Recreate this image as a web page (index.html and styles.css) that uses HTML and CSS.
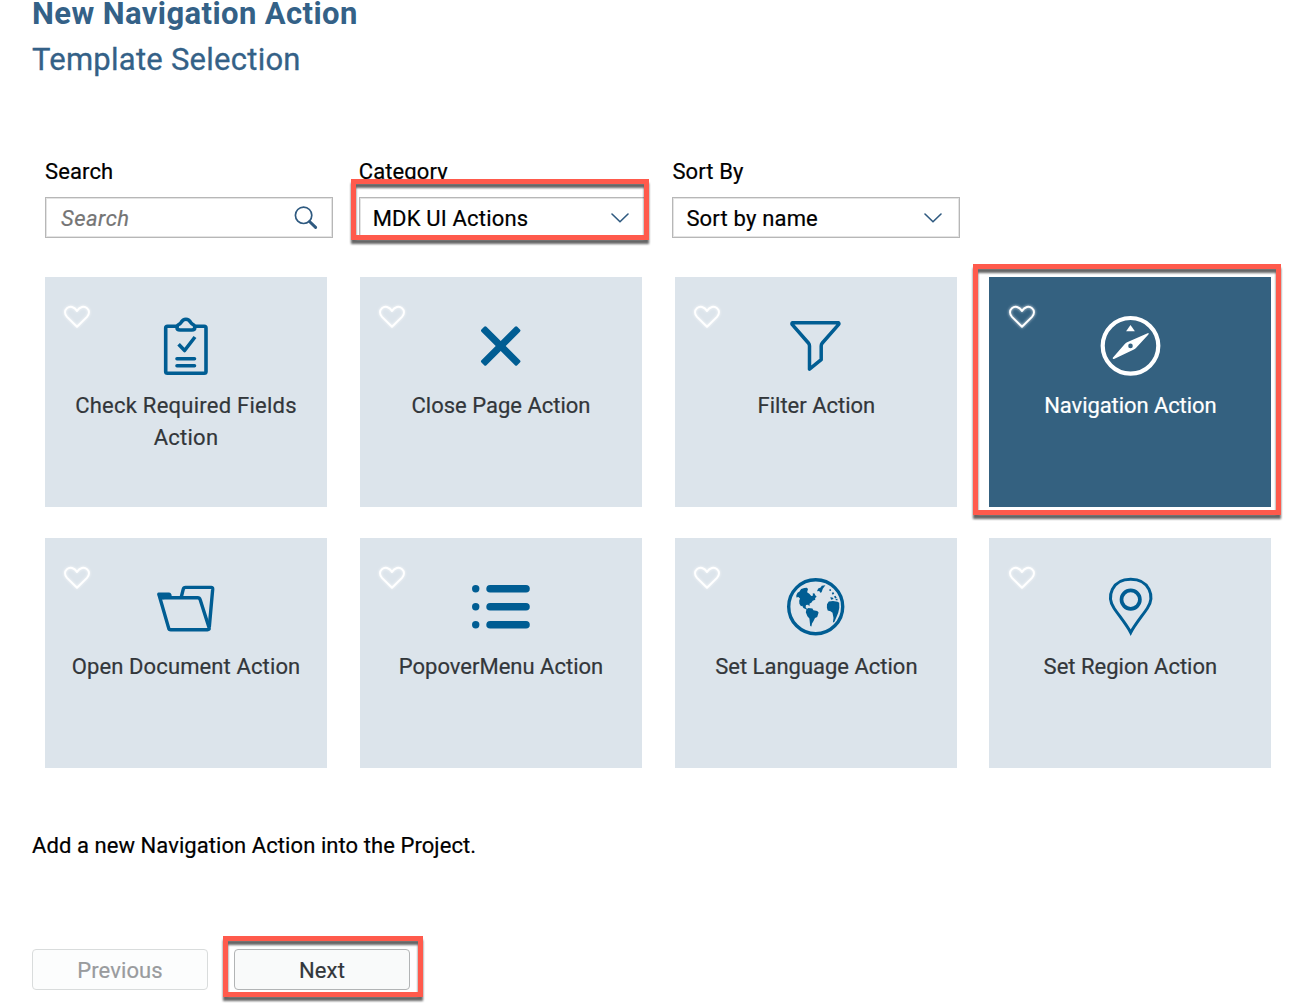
FILE: index.html
```html
<!DOCTYPE html>
<html lang="en">
<head>
<meta charset="utf-8">
<title>New Navigation Action</title>
<link rel="stylesheet" href="styles.css">
</head>
<body>
<svg class="defs" aria-hidden="true">
  <symbol id="heart" viewBox="0 0 34 30"><path d="M17 25.7 7 15.9C4.3 13.1 4.4 9.3 6.9 7.2c3-2.5 7.400-1.700 10.100 2.800 2.700-4.500 7.100-5.300 10.100-2.800 2.500 2.100 2.600 5.900-.1 8.700z"/></symbol>
</svg>
<main class="wizard">
  <h1 class="title">New Navigation Action</h1>
  <h2 class="subtitle">Template Selection</h2>

  <section class="filters">
    <div class="field">
      <label class="label">Search</label>
      <div class="control">
        <span class="placeholder">Search</span>
        <svg class="search-icon" width="24" height="24" viewBox="0 0 24 24"><circle cx="9.600" cy="9.300" r="8.200" fill="none" stroke="#2f5a80" stroke-width="1.700"/><path d="M15.500 15.500 21.600 21.400" stroke="#2f5a80" stroke-width="3" stroke-linecap="round"/></svg>
      </div>
    </div>
    <div class="field">
      <label class="label">Category</label>
      <div class="control">
        <span>MDK UI Actions</span>
        <svg class="chevron" width="18" height="10" viewBox="0 0 18 10"><path d="M1 1l8 7.800L17 1"/></svg>
        <i class="mark mark-category"></i>
      </div>
    </div>
    <div class="field">
      <label class="label">Sort By</label>
      <div class="control">
        <span>Sort by name</span>
        <svg class="chevron" width="18" height="10" viewBox="0 0 18 10"><path d="M1 1l8 7.800L17 1"/></svg>
      </div>
    </div>
  </section>

  <section class="tiles">
    <article class="tile">
      <svg class="heart"><use href="#heart"/></svg>
      <svg class="icon" viewBox="0 0 60 60"><g class="line" stroke-width="3.600">
        <path d="M20 10.200H11.500q-1.800 0-1.800 1.800v43.500q0 1.800 1.800 1.800h36.700q1.800 0 1.800-1.800V12q0-1.800-1.800-1.800H40"/>
        <path d="M24 14q-3 0-3-2.600 0-2.200 2.500-3.400 1-.4 1.800-1.800 1.600-3 4.600-3t4.600 3q.8 1.400 1.800 1.800 2.500 1.200 2.500 3.400 0 2.600-3 2.600z"/>
        <path stroke-linecap="butt" d="M22.600 28.300l6 6.200L39 21"/>
        <path d="M21 42.700h17.500M21 49.800h17.500"/></g></svg>
      <p class="wide">Check Required Fields Action</p>
    </article>
    <article class="tile">
      <svg class="heart"><use href="#heart"/></svg>
      <svg class="icon" viewBox="0 0 60 60"><g class="solid" transform="rotate(45 29.700 30)"><rect x="4.400" y="26.500" width="50.600" height="7" rx="1.600"/><rect x="26.200" y="4.700" width="7" height="50.600" rx="1.600"/></g></svg>
      <p>Close Page Action</p>
    </article>
    <article class="tile">
      <svg class="heart"><use href="#heart"/></svg>
      <svg class="icon" viewBox="0 0 60 60"><path class="line" stroke-width="3.500" d="M6.700 6.700h45.400q1.500.6.400 2L36.300 27q-1.100 1.300-1.100 3v13.700L23.500 53.200V30q0-1.700-1.100-3L6.300 8.700q-1-1.400.4-2z"/></svg>
      <p>Filter Action</p>
    </article>
    <article class="tile selected">
      <i class="mark mark-tile"></i>
      <svg class="heart"><use href="#heart"/></svg>
      <svg class="icon" viewBox="0 0 60 60"><circle cx="30.500" cy="29.800" r="27.800" fill="none" stroke="#fff" stroke-width="4.200"/><path fill="#fff" d="M30.500 9l4.400 6.200h-8.800z"/><path fill="#fff" fill-rule="evenodd" d="M48.200 17q1 .4.2 1.600L36.200 31.800q-1 1-2.300 1.700L14 42.900q-1.600.3-1.200-1.200L24.800 28q1-1 2.300-1.700zM30.500 27.600a2.300 2.300 0 1 0 0 4.600a2.300 2.300 0 1 0 0-4.600z"/></svg>
      <p class="narrow">Navigation Action</p>
    </article>
    <article class="tile">
      <svg class="heart"><use href="#heart"/></svg>
      <svg class="icon" viewBox="0 0 60 60"><g class="line" stroke-width="3.400"><path stroke-linecap="butt" d="M25.300 20l1.900-7.600q.5-2 2.300-2h25.700q1.600 0 1.500 1.800L53.300 50"/><path d="M3 17.800 12.600 50.900q.4 1.900 2.200 1.900h36.700q2.100 0 1.600-2L44.200 22.800q-.7-2-2.400-2H7"/></g><path class="solid" d="M2.500 15.500h10.600q1.700 0 2.300 2l.8 3.300L6 22.500 1.500 18q-.8-2.500 1-2.500z"/></svg>
      <p class="medium">Open Document Action</p>
    </article>
    <article class="tile">
      <svg class="heart"><use href="#heart"/></svg>
      <svg class="icon" viewBox="0 0 60 60"><g class="solid"><circle cx="4.700" cy="11.800" r="3.700"/><circle cx="4.700" cy="29.800" r="3.700"/><circle cx="4.700" cy="47.700" r="3.700"/><rect x="15.300" y="8" width="43.500" height="7.600" rx="3.800"/><rect x="15.300" y="26" width="43.500" height="7.600" rx="3.800"/><rect x="15.300" y="43.900" width="43.500" height="7.600" rx="3.800"/></g></svg>
      <p>PopoverMenu Action</p>
    </article>
    <article class="tile">
      <svg class="heart"><use href="#heart"/></svg>
      <svg class="icon" viewBox="0 0 60 60"><circle class="line" cx="29.700" cy="29.700" r="27" stroke-width="3.400"/><g class="solid">
        <path d="M10.300 18.200l1.200-2.400 2-1.200 1.600-2.600 3.200-1 2.500-.2 1.200 1.200-.9 3.200 2.200 1.600 2 2.200 1.700-.4-.3-2 1.600-.4 1.200 2.200 1.200 1.400-1.600 1.200.2 1.700-2.600 1-1.400 2-1.600.8-.3 2.800-1.300-1.600-2.100.3-.4 2.200 1.200 1.600 1.900.3 1.400 1.700-1.200.2-2.900-1.700-2.600-1.400-1.200-2.200-1.200.5-1.600-2.400-.2-3 .8-2.400-1.600-1.400-2 .6z"/>
        <path d="M20.400 32.600l2-1.600 4 .6 1 1.600 3.800.8 1.400 1.400-1.400 4.600-2.200 1-1.600 3.200-1.400 2.400-.6 3-1.200-.6-.8-7.400-2-2.400-1.600-4z"/>
        <path d="M31 14.200l1.200-2.600 2.400-1.200 1.200-1.600 3.600-.5-2.600 3.400-1.200 3.600-1.400.4-.9-1.800z"/>
        <path d="M41 27.300l1.800-2.700 4.200-.6 4.600.8 1.600 1 .1 5-1 4.600-1.600 4-2.400 5.600-1.400.4.600-4.400-1-5.200-2-1.600-2.800-.8-.8-2.600z"/>
        <path d="M43 12.700l1.600-.6.6 1.600-1.400.4zM45.800 16l1.400-1 1 1.800-1.600 1zM48 19.400l1.500-.6 1.200 2-1.600.6zM44.300 20.200l2.200.4 1.200 1.400-2.600.8zM49.500 22l1.800-.2.400 1.400-1.800.1z"/></g></svg>
      <p>Set Language Action</p>
    </article>
    <article class="tile">
      <svg class="heart"><use href="#heart"/></svg>
      <svg class="icon" viewBox="0 0 60 60"><g class="line"><path stroke-width="3" stroke-linejoin="miter" d="M30.700 55.600C27.500 49 19 38.500 14.200 31.500 6 19.500 12 2.300 30.700 2.300S55.400 19.500 47.200 31.500C42.400 38.500 33.900 49 30.700 55.600z"/><circle cx="30.700" cy="22.600" r="9.200" stroke-width="3.700"/></g></svg>
      <p>Set Region Action</p>
    </article>
  </section>

  <p class="description">Add a new Navigation Action into the Project.</p>

  <footer class="actions">
    <button class="button" disabled>Previous</button>
    <button class="button next">Next<i class="mark mark-next"></i></button>
  </footer>
</main>
</body>
</html>
```
FILE: styles.css
```css
* { box-sizing: border-box; }
body {
  margin: 0;
  height: 1008px;
  overflow: hidden;
  background: #fff;
  color: #000;
  font: 22px/32px Roboto, "Liberation Sans", sans-serif;
  letter-spacing: 0.07px;
  -webkit-text-stroke: 0.2px currentColor;
}
h1, h2, p { margin: 0; }
.defs { display: none; }
.wizard { padding-left: 32px; }

.title, .subtitle { color: #346187; font-size: 31px; }
.title { font-weight: 700; line-height: 27px; letter-spacing: 0.4px; -webkit-text-stroke: 0; }
.subtitle { margin-top: 12px; font-weight: 400; line-height: 41px; letter-spacing: 0.25px; -webkit-text-stroke: 0.3px currentColor; }

.filters { display: flex; gap: 25.7px; margin: 78px 0 0 13px; }
.field { width: 288px; }
.label { display: block; line-height: 28px; margin-bottom: 11px; letter-spacing: 0.12px; }
.control {
  position: relative;
  display: flex;
  align-items: center;
  justify-content: space-between;
  height: 41px;
  padding: 0 14px 0 13px;
  border: 1px solid #b7b7b7;
  box-shadow: inset 0 0 0 1px #e4e4e4;
  letter-spacing: 0.18px;
}
.control span { padding-top: 2px; }
.control .placeholder { color: #757575; font-style: italic; letter-spacing: 0.5px; padding-left: 2px; }
.chevron { margin-right: 3px; fill: none; stroke: #2f5a80; stroke-width: 1.6; stroke-linecap: round; stroke-linejoin: round; }

.tiles {
  display: grid;
  grid-template-columns: 315px 315.4px 314px 282px;
  row-gap: 31px;
  margin: 39px 0 0 13px;
}
.tile {
  position: relative;
  width: 282px;
  height: 230px;
  padding: 39px 24px 0;
  background: #dce4eb;
  color: #32363a;
  text-align: center;
}
.tile .icon { display: block; width: 60px; height: 60px; margin: 0 auto 14px; overflow: visible; }
.tile p { letter-spacing: 0; }
.tile .wide { letter-spacing: 0.25px; }
.tile .medium { letter-spacing: 0.12px; }
.tile .narrow { letter-spacing: -0.08px; }
.line { fill: none; stroke: #005d93; stroke-linecap: round; stroke-linejoin: round; }
.solid { fill: #005d93; }
.heart {
  position: absolute;
  left: 15px;
  top: 24px;
  width: 34px;
  height: 30px;
  overflow: visible;
  fill: none;
  stroke: #fff;
  stroke-width: 1.9;
  stroke-linejoin: round;
  filter: drop-shadow(0 0 1.5px rgba(255, 255, 255, 0.8));
}
.tile:nth-child(4n) .heart { left: 16px; }
.selected { background: #346180; color: #fff; }

/* Callout frames over the highlighted controls */
.mark {
  position: absolute;
  border: 5px solid #ff5a4c;
  filter: drop-shadow(0 4px 1.2px rgba(0, 0, 0, 0.6));
  pointer-events: none;
}
.mark-category { left: -9px; top: -19px; width: 298px; height: 61px; }
.mark-tile { left: -16px; top: -13px; width: 308px; height: 251px; }
.mark-next { left: -12px; top: -14px; width: 200px; height: 61px; }

.description { margin-top: 62px; }
.actions { display: flex; gap: 26px; margin-top: 87px; }
.button {
  position: relative;
  width: 176px;
  height: 41px;
  padding: 2px 0 0;
  border: 1px solid #d9dcdc;
  border-radius: 4px;
  background: #fcfdfd;
  color: #999b9d;
  font: inherit;
  letter-spacing: 0.1px;
}
.next { border-color: #b2b4b5; background: #f9fafa; color: #32363a; }
```
